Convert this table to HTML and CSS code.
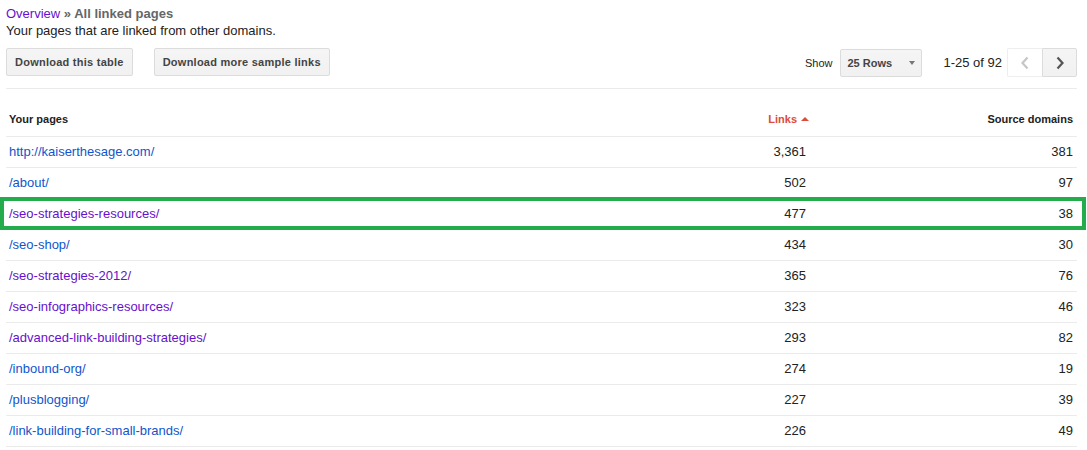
FILE: index.html
```html
<!DOCTYPE html>
<html>
<head>
<meta charset="utf-8">
<link rel="stylesheet" href="styles.css">
</head>
<body>
<div class="page">
  <div class="crumbs"><a class="visited" href="#">Overview</a> <span class="crumb-cur">» All linked pages</span></div>
  <div class="desc">Your pages that are linked from other domains.</div>
  <div class="toolbar">
    <div class="actions">
      <button class="btn">Download this table</button>
      <button class="btn">Download more sample links</button>
    </div>
    <div class="controls">
      <span class="show">Show</span>
      <div class="select"><span>25 Rows</span><i class="caret"></i></div>
      <span class="range">1-25 of 92</span>
      <div class="pager">
        <button class="pg prev" aria-label="Previous"><svg width="10" height="14" viewBox="0 0 10 14"><path d="M7.5 1.5 L2.5 7 L7.5 12.5" fill="none" stroke="#c6c6c6" stroke-width="2.2"/></svg></button>
        <button class="pg next" aria-label="Next"><svg width="10" height="14" viewBox="0 0 10 14"><path d="M2.5 1.5 L7.5 7 L2.5 12.5" fill="none" stroke="#555" stroke-width="2.2"/></svg></button>
      </div>
    </div>
  </div>
  <div class="table">
    <div class="row head">
      <div class="c1">Your pages</div>
      <div class="c2 sorted">Links<i class="up"></i></div>
      <div class="c3">Source domains</div>
    </div>
    <div class="row"><div class="c1"><a href="#">http://kaiserthesage.com/</a></div><div class="c2">3,361</div><div class="c3">381</div></div>
    <div class="row"><div class="c1"><a href="#">/about/</a></div><div class="c2">502</div><div class="c3">97</div></div>
    <div class="row hl"><div class="c1"><a class="visited" href="#">/seo-strategies-resources/</a></div><div class="c2">477</div><div class="c3">38</div><div class="mark"></div></div>
    <div class="row"><div class="c1"><a href="#">/seo-shop/</a></div><div class="c2">434</div><div class="c3">30</div></div>
    <div class="row"><div class="c1"><a class="visited" href="#">/seo-strategies-2012/</a></div><div class="c2">365</div><div class="c3">76</div></div>
    <div class="row"><div class="c1"><a class="visited" href="#">/seo-infographics-resources/</a></div><div class="c2">323</div><div class="c3">46</div></div>
    <div class="row"><div class="c1"><a class="visited" href="#">/advanced-link-building-strategies/</a></div><div class="c2">293</div><div class="c3">82</div></div>
    <div class="row"><div class="c1"><a href="#">/inbound-org/</a></div><div class="c2">274</div><div class="c3">19</div></div>
    <div class="row"><div class="c1"><a href="#">/plusblogging/</a></div><div class="c2">227</div><div class="c3">39</div></div>
    <div class="row"><div class="c1"><a href="#">/link-building-for-small-brands/</a></div><div class="c2">226</div><div class="c3">49</div></div>
  </div>
</div>
</body>
</html>
```
FILE: styles.css
```css
* { box-sizing: border-box; }
html, body { margin: 0; padding: 0; background: #fff; }
body {
  font-family: "Liberation Sans", Arial, sans-serif;
  font-size: 13px;
  color: #222;
  overflow: hidden;
}
.page { padding: 5px 10px 0 6px; }
a { color: #1155cc; text-decoration: none; }
a.visited { color: #6611cc; }
.crumbs, .desc { line-height: 17px; }
.crumb-cur { color: #666; font-weight: bold; }
.toolbar {
  display: flex;
  justify-content: space-between;
  align-items: flex-start;
  margin-top: 9px;
  padding-bottom: 11px;
  border-bottom: 1px solid #ebebeb;
}
.actions { display: flex; gap: 21px; }
.btn {
  height: 28px;
  padding: 0 8px;
  border: 1px solid #dcdcdc;
  border-radius: 2px;
  background: linear-gradient(#f5f5f5, #f1f1f1);
  color: #444;
  font-family: "Liberation Sans", Arial, sans-serif;
  font-size: 11px;
  font-weight: bold;
  letter-spacing: 0.25px;
  cursor: default;
}
.controls { display: flex; align-items: center; height: 29px; }
.show { font-size: 11px; color: #222; margin-right: 8px; }
.select {
  width: 82px;
  height: 28px;
  margin-top: 1px;
  border: 1px solid #dcdcdc;
  border-radius: 2px;
  background: linear-gradient(#f5f5f5, #f1f1f1);
  display: flex;
  align-items: center;
  justify-content: space-between;
  padding: 0 6px 0 6px;
  font-size: 11px;
  font-weight: bold;
  color: #444;
}
.caret {
  width: 0; height: 0;
  border-left: 3.5px solid transparent;
  border-right: 3.5px solid transparent;
  border-top: 4px solid #777;
}
.range { margin-left: 21px; margin-right: 5px; font-size: 13px; color: #222; }
.pager { display: flex; }
.pg {
  width: 35px;
  height: 29px;
  padding: 0;
  display: flex;
  align-items: center;
  justify-content: center;
  border-radius: 2px;
}
.prev { background: #fff; border: 1px solid #eeeeee; border-right: none; border-radius: 2px 0 0 2px; }
.next { background: linear-gradient(#f5f5f5, #f1f1f1); border: 1px solid #dcdcdc; border-radius: 0 2px 2px 0; }
.table { margin-top: 16px; }
.row {
  position: relative;
  display: grid;
  grid-template-columns: 1fr 200px 267px;
  height: 31px;
  line-height: 30px;
  border-bottom: 1px solid #ebebeb;
}
.row.head { height: 32px; line-height: 29px; }
.row .c1 { padding-left: 3px; }
.row .c2, .row .c3 { text-align: right; padding-right: 4px; }
.head { font-size: 11px; font-weight: bold; color: #222; }
.head .sorted { color: #dd4b39; padding-right: 1px; }
.up {
  display: inline-block;
  width: 0; height: 0;
  margin-left: 4px;
  vertical-align: 2px;
  border-left: 4px solid transparent;
  border-right: 4px solid transparent;
  border-bottom: 4px solid #dd4b39;
}
.mark {
  position: absolute;
  left: -6px;
  top: -2px;
  width: 1086px;
  height: 33px;
  border: 4px solid #23ab4c;
  pointer-events: none;
}
```
